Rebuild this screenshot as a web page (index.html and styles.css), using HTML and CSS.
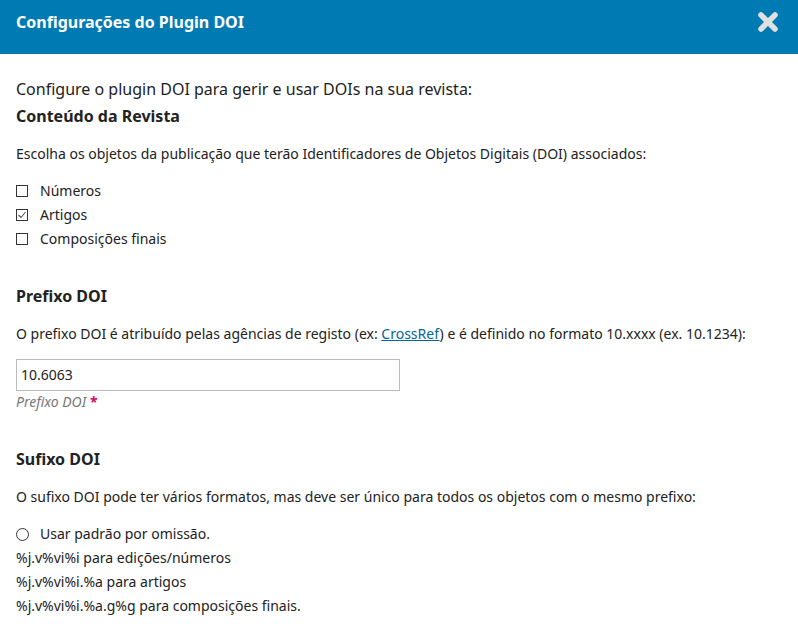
FILE: index.html
```html
<!DOCTYPE html>
<html>
<head>
<meta charset="utf-8">
<link rel="stylesheet" href="styles.css">
</head>
<body>
<div class="header">
  <h1 class="title">Configurações do Plugin DOI</h1>
  <span class="close" aria-label="Fechar">
    <svg width="22" height="22" viewBox="0 0 22 22"><path d="M4 4 L18 18 M18 4 L4 18" stroke="#e0e0e0" stroke-width="5.5" stroke-linecap="round"/></svg>
  </span>
</div>
<div class="content">
  <p class="intro">Configure o plugin DOI para gerir e usar DOIs na sua revista:</p>
  <h2 class="section-title first">Conteúdo da Revista</h2>
  <p class="desc">Escolha os objetos da publicação que terão Identificadores de Objetos Digitais (DOI) associados:</p>
  <ul class="options">
    <li><span class="cb"></span>Números</li>
    <li><span class="cb checked"><svg width="10" height="10" viewBox="0 0 10 10"><path d="M1.5 5 L4 7.5 L8.5 2" stroke="#555" stroke-width="1.1" fill="none"/></svg></span>Artigos</li>
    <li><span class="cb"></span>Composições finais</li>
  </ul>
  <h2 class="section-title second">Prefixo DOI</h2>
  <p class="desc">O prefixo DOI é atribuído pelas agências de registo (ex: <a href="#">CrossRef</a>) e é definido no formato 10.xxxx (ex. 10.1234):</p>
  <div class="field">
    <div class="input">10.6063</div>
    <div class="label">Prefixo DOI <span class="req">*</span></div>
  </div>
  <h2 class="section-title third">Sufixo DOI</h2>
  <p class="desc">O sufixo DOI pode ter vários formatos, mas deve ser único para todos os objetos com o mesmo prefixo:</p>
  <div class="radio-row"><span class="radio"></span>Usar padrão por omissão.</div>
  <div class="line">%j.v%vi%i para edições/números</div>
  <div class="line">%j.v%vi%i.%a para artigos</div>
  <div class="line">%j.v%vi%i.%a.g%g para composições finais.</div>
</div>
</body>
</html>
```

FILE: styles.css
```css
html, body {
  margin: 0;
  padding: 0;
  background: #fff;
  font-family: "Noto Sans", sans-serif;
  color: #222;
}
.header {
  background: #007ab2;
  height: 54px;
  display: flex;
  align-items: center;
  justify-content: space-between;
  padding: 0 19px 0 16px;
}
.title {
  margin: 0;
  color: #fff;
  font-size: 16px;
  font-weight: 700;
  position: relative;
  top: -5px;
}
.close {
  display: flex;
  position: relative;
  top: -5px;
}
.content {
  padding: 21px 16px 0 16px;
}
.intro {
  margin: 0;
  font-size: 16px;
  line-height: 28px;
}
.section-title {
  margin: 0;
  font-size: 16px;
  font-weight: 700;
  line-height: 24px;
}
.section-title.first {
  margin-top: 1px;
}
.section-title.second {
  margin-top: 33px;
}
.section-title.third {
  margin-top: 34px;
}
.desc {
  margin: 14px 0 0 0;
  font-size: 14px;
  line-height: 24px;
}
.options {
  list-style: none;
  margin: 13px 0 0 0;
  padding: 0;
}
.options li {
  font-size: 14px;
  line-height: 24px;
  display: flex;
  align-items: center;
}
.cb {
  width: 10px;
  height: 10px;
  border: 1px solid #333;
  margin-right: 12px;
  display: inline-flex;
  align-items: center;
  justify-content: center;
  box-sizing: content-box;
}
a {
  color: #006798;
}
.field {
  margin-top: 13px;
}
.input {
  width: 384px;
  height: 32px;
  border: 1px solid #bbb;
  box-sizing: border-box;
  font-size: 14px;
  line-height: 30px;
  padding-left: 4px;
}
.label {
  font-size: 14px;
  font-style: italic;
  color: #777;
  line-height: 22px;
}
.req {
  color: #d00a6c;
  font-style: normal;
  font-weight: 700;
}
.radio-row {
  margin-top: 13px;
  font-size: 14px;
  line-height: 24px;
  display: flex;
  align-items: center;
}
.radio {
  width: 11px;
  height: 11px;
  border: 1px solid #333;
  border-radius: 50%;
  margin-right: 11px;
}
.line {
  font-size: 14px;
  line-height: 24px;
}
```
